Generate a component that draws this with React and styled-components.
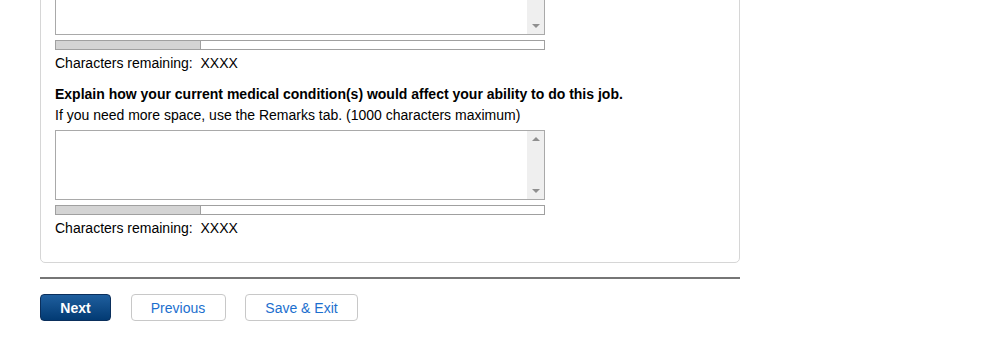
import React from "react";
import styled, { createGlobalStyle } from "styled-components";

const Global = createGlobalStyle`
  html, body { margin: 0; padding: 0; background: #fff; }
  body { font-family: "Liberation Sans", Arial, sans-serif; font-size: 14px; color: #000; overflow: hidden; }
`;

const Page = styled.div`
  width: 700px;
  margin: -50px 0 0 40px;
`;

const Panel = styled.div`
  border: 1px solid #d6d6d6;
  border-radius: 5px;
  padding: 14px 14px 26px 14px;
  display: flex;
  flex-direction: column;
  gap: 15px;
`;

const Field = styled.div`
  display: flex;
  flex-direction: column;
`;

const Label = styled.div`
  font-weight: bold;
  line-height: 16px;
`;

const Help = styled.div`
  line-height: 16px;
  margin-top: 5px;
  margin-bottom: 7px;
`;

const AreaBox = styled.div`
  display: flex;
  width: 490px;
  height: 70px;
  box-sizing: border-box;
  border: 1px solid #a9a9a9;
  background: #fff;
`;

const Area = styled.textarea`
  flex: 1;
  border: none;
  outline: none;
  resize: none;
  padding: 2px;
  margin: 0;
  font: inherit;
  background: transparent;
`;

const ScrollTrack = styled.div`
  width: 17px;
  background: #efefef;
  display: flex;
  flex-direction: column;
  justify-content: space-between;
  align-items: center;
  padding: 6px 0;
`;

const Arrow = styled.span`
  width: 0;
  height: 0;
  border-left: 4px solid transparent;
  border-right: 4px solid transparent;
  ${(p) =>
    p.$up
      ? "border-bottom: 4px solid #8f8f8f;"
      : "border-top: 4px solid #8f8f8f;"}
`;

const Meter = styled.div`
  width: 490px;
  height: 10px;
  box-sizing: border-box;
  border: 1px solid #a0a0a0;
  margin-top: 5px;
  background: #fff;
`;

const MeterFill = styled.div`
  height: 100%;
  background: #d4d4d4;
  border-right: 1px solid #a0a0a0;
  box-sizing: border-box;
`;

const Remaining = styled.div`
  line-height: 16px;
  margin-top: 5px;
`;

const Rule = styled.hr`
  border: none;
  height: 2px;
  background: #767676;
  margin: 14px 0 15px 0;
`;

const Buttons = styled.div`
  display: flex;
  gap: 19.5px;
`;

const Button = styled.button`
  height: 27px;
  width: ${(p) => p.$w}px;
  padding: 0;
  border-radius: 4px;
  font-family: "Liberation Sans", Arial, sans-serif;
  font-size: 14px;
  cursor: pointer;
  ${(p) =>
    p.$primary
      ? `
    background: linear-gradient(#1f5f9e, #023a73);
    border: 1px solid #0b2f5c;
    color: #fff;
    font-weight: bold;
  `
      : `
    background: #fff;
    border: 1px solid #c8c8c8;
    color: #1c6fce;
  `}
`;

function TextField({ label, help, fill }) {
  return (
    <Field>
      {label && <Label>{label}</Label>}
      {help && <Help>{help}</Help>}
      <AreaBox>
        <Area />
        <ScrollTrack>
          <Arrow $up />
          <Arrow />
        </ScrollTrack>
      </AreaBox>
      <Meter>
        <MeterFill style={{ width: fill }} />
      </Meter>
      <Remaining>Characters remaining:&nbsp; XXXX</Remaining>
    </Field>
  );
}

export default function App() {
  return (
    <>
      <Global />
      <Page>
        <Panel>
          <TextField fill="145px" />
          <TextField
            fill="145px"
            label="Explain how your current medical condition(s) would affect your ability to do this job."
            help="If you need more space, use the Remarks tab. (1000 characters maximum)"
          />
        </Panel>
        <Rule />
        <Buttons>
          <Button $primary $w={71}>Next</Button>
          <Button $w={95}>Previous</Button>
          <Button $w={113}>Save &amp; Exit</Button>
        </Buttons>
      </Page>
    </>
  );
}
